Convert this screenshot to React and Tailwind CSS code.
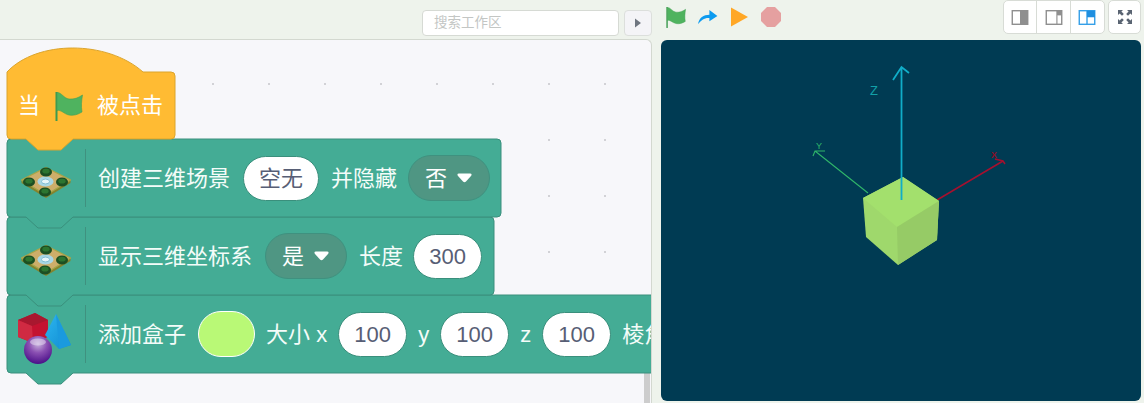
const CJK = "font-['Liberation_Sans','Noto_Sans_CJK_SC',sans-serif]";

const BLOCK_FILL = '#44ac95';
const BLOCK_LINE = '#3a8f7c';

// Block outlines, drawn in the block's own box so that the notch can hang below it.
function blockPath(w, h) {
  return `M0 4 Q0 0 4 0 H${w - 4} Q${w} 0 ${w} 4 V${h - 4} Q${w} ${h} ${w - 4} ${h} H66 L54 ${h + 11} H31 L19 ${h} H4 Q0 ${h} 0 ${h - 4} Z`;
}

function FlagIcon({ className }) {
  return (
    <svg viewBox="0 0 28 29" className={className}>
      <path d="M1.5 0.5 V28.5" stroke="#3c9a4f" strokeWidth="2" strokeLinecap="round" />
      <path d="M2 0.5 C6 0 9 6.5 14 7 C19 7.5 23 6 27.5 3 C26.5 9 26 14 27 20 C23 22.5 18 24 14 23 C9 22 6 17.5 2 18.5 Z" fill="#4fb35f" stroke="#45a055" strokeWidth="0.6" />
    </svg>
  );
}

function TileIcon() {
  const trees = [[25, 5], [8, 15], [41, 15], [24, 25]];
  return (
    <svg viewBox="0 0 50 32" className="mt-[9px] h-[32px] w-[50px]">
      <path d="M25 0.5 L49.5 13 V16 L25 31 L0.5 16 V13 Z" fill="#85842e" />
      <path d="M25 0.5 L49.5 13 L25 28 L0.5 13 Z" fill="#cdae6a" stroke="#a8a648" strokeWidth="1.2" />
      <ellipse cx="24.5" cy="14.5" rx="8" ry="5" fill="#a8d6e4" />
      <ellipse cx="24.5" cy="14.5" rx="4" ry="2.4" fill="#e6f5f9" stroke="#70b4cc" strokeWidth="0.8" />
      {trees.map(([x, y]) => (
        <g key={`${x}-${y}`}>
          <ellipse cx={x} cy={y} rx="6" ry="4.6" fill="#1c4f22" />
          <ellipse cx={x} cy={y - 0.8} rx="3.6" ry="2.4" fill="#2c7530" />
        </g>
      ))}
    </svg>
  );
}

function ShapesIcon() {
  return (
    <svg viewBox="0 0 54 52" className="ml-[-1px] mt-[9px] h-[52px] w-[54px]">
      <defs>
        <radialGradient id="orb" cx="0.5" cy="0.28" r="0.72">
          <stop offset="0" stopColor="#c9b4de" />
          <stop offset="0.45" stopColor="#8a4fb2" />
          <stop offset="1" stopColor="#4a0f88" />
        </radialGradient>
        <linearGradient id="cone" x1="0" y1="0" x2="1" y2="1">
          <stop offset="0" stopColor="#2db6f0" />
          <stop offset="1" stopColor="#0f8ad0" />
        </linearGradient>
      </defs>
      <path d="M0 7 L17 0 L30 7 V24 L15 30 L0 24 Z" fill="#c41230" />
      <path d="M0 7 L17 0 L30 7 L14 13 Z" fill="#a8182f" />
      <path d="M0 7 L14 13 L15 30 L0 24 Z" fill="#d02a42" />
      <path d="M38 1 L53 32 L41 36 L27 22 Z" fill="url(#cone)" />
      <path d="M38 1 L41 36 L53 32 Z" fill="#1a9ade" />
      <circle cx="20" cy="37" r="14" fill="url(#orb)" />
      <ellipse cx="20" cy="29" rx="8" ry="3.5" fill="#e6daf0" opacity="0.55" />
    </svg>
  );
}

// white rounded field with a value in it
function Field({ children, className = '' }) {
  return (
    <span className={`flex h-[45px] items-center justify-center rounded-[23px] border border-[#3a8f7c] bg-white text-[#575e75] ${className}`}>
      {children}
    </span>
  );
}

function Dropdown({ label, className = '' }) {
  return (
    <span className={`flex h-[46px] items-center rounded-[23px] border border-[#3f917f] bg-[#4f9683] text-white ${className}`}>
      <span>{label}</span>
      <svg viewBox="0 0 15 10" className="ml-[10px] h-[10px] w-[15px]">
        <path d="M2 0.5 H13 Q15.5 0.5 14 3 L9 8.5 Q7.5 10 6 8.5 L1 3 Q-0.5 0.5 2 0.5 Z" fill="#fff" />
      </svg>
    </span>
  );
}

function Block({ width, zClass, icon, children }) {
  return (
    <div className={`relative h-[78px] ${zClass}`} style={{ width }}>
      <svg className="absolute left-[0.5px] top-0 overflow-visible" width={width} height={78}>
        <path d={blockPath(width - 1, 78)} fill={BLOCK_FILL} stroke={BLOCK_LINE} strokeWidth="1" />
      </svg>
      <div className="relative flex h-full items-center whitespace-nowrap text-[22px] text-[#f4fcf9]">
        <div className="flex h-[58px] w-[80px] shrink-0 items-center justify-center border-r border-[#3f917f]">{icon}</div>
        {children}
      </div>
    </div>
  );
}

function HatBlock() {
  return (
    <div className="relative z-40 h-[91px] w-[170px]">
      <svg className="absolute left-[0.5px] top-0 overflow-visible" width="170" height="91">
        <path
          d="M0 24 C30 -8 100 -8 136 24 H164 Q168 24 168 28 V87 Q168 91 164 91 H66 L54 102 H31 L19 91 H4 Q0 91 0 87 Z"
          fill="#ffbb33"
          stroke="#dba42c"
          strokeWidth="1"
        />
      </svg>
      <div className="relative flex h-full items-end pb-[17px] pl-[12px] text-[22px] leading-[32px] text-white">
        <span>当</span>
        <FlagIcon className="mb-[1px] ml-[15px] mr-[14px] h-[29px] w-[28px]" />
        <span>被点击</span>
      </div>
    </div>
  );
}

function Scene() {
  return (
    <svg viewBox="0 0 480 361" className="h-full w-full">
      {/* axes */}
      <path d="M207 153 L154 111 M152 116 L154 111 L164 111" stroke="#2fb56a" strokeWidth="1.1" fill="none" />
      <text x="155" y="109" fontSize="9" fill="#2fb56a" fontFamily="Liberation Sans">Y</text>
      <path d="M276 160 L342 121 M334 119 L342 121 L344 124" stroke="#a5102e" strokeWidth="1.5" fill="none" />
      <text x="330" y="118" fontSize="9" fontWeight="bold" fill="#8c0f28" fontFamily="Liberation Sans">X</text>
      <text x="209" y="55" fontSize="13" fill="#12a0a8" fontFamily="Liberation Sans">Z</text>
      {/* box, silhouette first so the faces leave no seams */}
      <path d="M202 158 L242 137 L278 161 L276 200 L237 225 L205 197 Z" fill="#9fd86c" />
      <path d="M202 158 L242 137 L278 161 L236 187 Z" fill="#a3e06d" />
      <path d="M236 187 L278 161 L276 200 L237 225 Z" fill="#96cb66" />
      <path d="M240.5 160 V27 M232 40 L240.5 27 L248 33" stroke="#10adc8" strokeWidth="1.8" fill="none" />
    </svg>
  );
}

function LayoutButton({ children, className = '' }) {
  return <div className={`flex h-full w-[34px] items-center justify-center ${className}`}>{children}</div>;
}

export default function App() {
  return (
    <div className={`flex h-[403px] w-[1144px] overflow-hidden bg-[#eef3ec] ${CJK}`}>
      <div className="flex w-[652px] shrink-0 flex-col">
        <div className="flex h-[39px] shrink-0 justify-end gap-[5px] pt-[10px]">
          <div className="flex h-[26px] w-[197px] items-center rounded-[4px] border border-[#d6dad4] bg-white pl-[11px] pt-[1px] text-[13.5px] text-[#c3c6c4]">
            搜索工作区
          </div>
          <div className="flex h-[26px] w-[28px] items-center justify-center rounded-[4px] border border-[#dcdfdc] bg-[#f4f4f7]">
            <svg viewBox="0 0 8 12" className="h-[10px] w-[6px]"><path d="M0 0 L8 6 L0 12 Z" fill="#6f7680" /></svg>
          </div>
        </div>
        <div className="relative flex-1 overflow-hidden rounded-tr-[6px] border-r border-t border-[#d3d8d0] bg-[#f7f7fa] bg-[radial-gradient(circle,#d2d2d6_0.9px,transparent_1.1px)] bg-[size:56px_56px] bg-[position:185px_16px] pl-[6px] pt-[8px]">
          <HatBlock />
          <Block width={495} zClass="z-30" icon={<TileIcon />}>
            <span className="ml-[12px]">创建三维场景</span>
            <Field className="ml-[13px] w-[76px]">空无</Field>
            <span className="ml-[12px]">并隐藏</span>
            <Dropdown label="否" className="ml-[11px] w-[82px] pl-[16px]" />
          </Block>
          <Block width={488} zClass="z-20" icon={<TileIcon />}>
            <span className="ml-[12px]">显示三维坐标系</span>
            <Dropdown label="是" className="ml-[13px] w-[82px] pl-[16px]" />
            <span className="ml-[12px]">长度</span>
            <Field className="ml-[10px] w-[69px]">300</Field>
          </Block>
          <Block width={700} zClass="z-10" icon={<ShapesIcon />}>
            <span className="ml-[12px]">添加盒子</span>
            <span className="ml-[12px] h-[46px] w-[57px] rounded-[23px] border border-white bg-[#b9f976]" />
            <span className="ml-[11px]">大小 x</span>
            <Field className="ml-[11px] w-[69px]">100</Field>
            <span className="ml-[11px]">y</span>
            <Field className="ml-[11px] w-[69px]">100</Field>
            <span className="ml-[11px]">z</span>
            <Field className="ml-[11px] w-[69px]">100</Field>
            <span className="ml-[11px]">棱角</span>
          </Block>
          <div className="absolute bottom-0 right-[1px] h-[37px] w-[6px] rounded-t-[3px] bg-[#cdcdcd]" />
        </div>
      </div>

      <div className="ml-[9px] flex w-[480px] shrink-0 flex-col pb-[2px]">
        <div className="flex h-10 shrink-0 justify-between">
          <div className="flex items-start gap-[11px] pl-[5px] pt-[7px]">
            <FlagIcon className="h-[21px] w-[20px]" />
            <svg viewBox="0 0 22 18" className="mt-[2px] h-[17px] w-[21px]">
              <path d="M1 16 C2 9 7 6 13 6 V1 L21.5 7.5 L13 13 V9.5 C8 9 4 12 1 16 Z" fill="#0c9bf0" />
            </svg>
            <svg viewBox="0 0 18 20" className="ml-[2px] h-[20px] w-[17px]"><path d="M0 0 L18 10 L0 20 Z" fill="#ffa726" /></svg>
            <svg viewBox="0 0 20 20" className="ml-[2px] h-[20px] w-[20px]">
              <path d="M6 0 H14 L20 6 V14 L14 20 H6 L0 14 V6 Z" fill="#e5a0a0" />
            </svg>
          </div>
          <div className="flex h-[34px] gap-[3px]">
            <div className="flex w-[102px] rounded-[5px] border border-[#d8dcd6] bg-white">
              <LayoutButton className="border-r border-[#d8dcd6]">
                <svg viewBox="0 0 18 16" className="h-[15px] w-[18px]">
                  <rect x="0.75" y="0.75" width="16.5" height="14.5" fill="none" stroke="#8f8f8f" strokeWidth="1.5" />
                  <rect x="9" y="0.75" width="8.5" height="14.5" fill="#8f8f8f" />
                </svg>
              </LayoutButton>
              <LayoutButton className="border-r border-[#d8dcd6]">
                <svg viewBox="0 0 18 16" className="h-[15px] w-[18px]">
                  <rect x="0.75" y="0.75" width="16.5" height="14.5" fill="none" stroke="#8f8f8f" strokeWidth="1.5" />
                  <rect x="11.5" y="0.75" width="6" height="5" fill="#8f8f8f" />
                  <rect x="11.5" y="5.5" width="1.2" height="10" fill="#8f8f8f" />
                </svg>
              </LayoutButton>
              <LayoutButton>
                <svg viewBox="0 0 18 16" className="h-[15px] w-[18px]">
                  <rect x="0.75" y="0.75" width="16.5" height="14.5" fill="none" stroke="#36a0e8" strokeWidth="1.5" />
                  <path d="M9 0.75 V15.5" stroke="#36a0e8" strokeWidth="1.5" />
                  <rect x="9" y="0.75" width="8.5" height="7" fill="#1f8fe0" />
                </svg>
              </LayoutButton>
            </div>
            <div className="flex w-[33px] items-center justify-center rounded-[5px] border border-[#d8dcd6] bg-white">
              <svg viewBox="0 0 16 16" className="h-[16px] w-[16px]">
                <path d="M1 1 H6 L4.4 2.6 L6.8 5 L5 6.8 L2.6 4.4 L1 6 Z M15 1 V6 L13.4 4.4 L11 6.8 L9.2 5 L11.6 2.6 L10 1 Z M1 15 V10 L2.6 11.6 L5 9.2 L6.8 11 L4.4 13.4 L6 15 Z M15 15 H10 L11.6 13.4 L9.2 11 L11 9.2 L13.4 11.6 L15 10 Z" fill="#5a6472" />
              </svg>
            </div>
          </div>
        </div>
        <div className="flex-1 overflow-hidden rounded-[6px] bg-[#003b53]">
          <Scene />
        </div>
      </div>
    </div>
  );
}
